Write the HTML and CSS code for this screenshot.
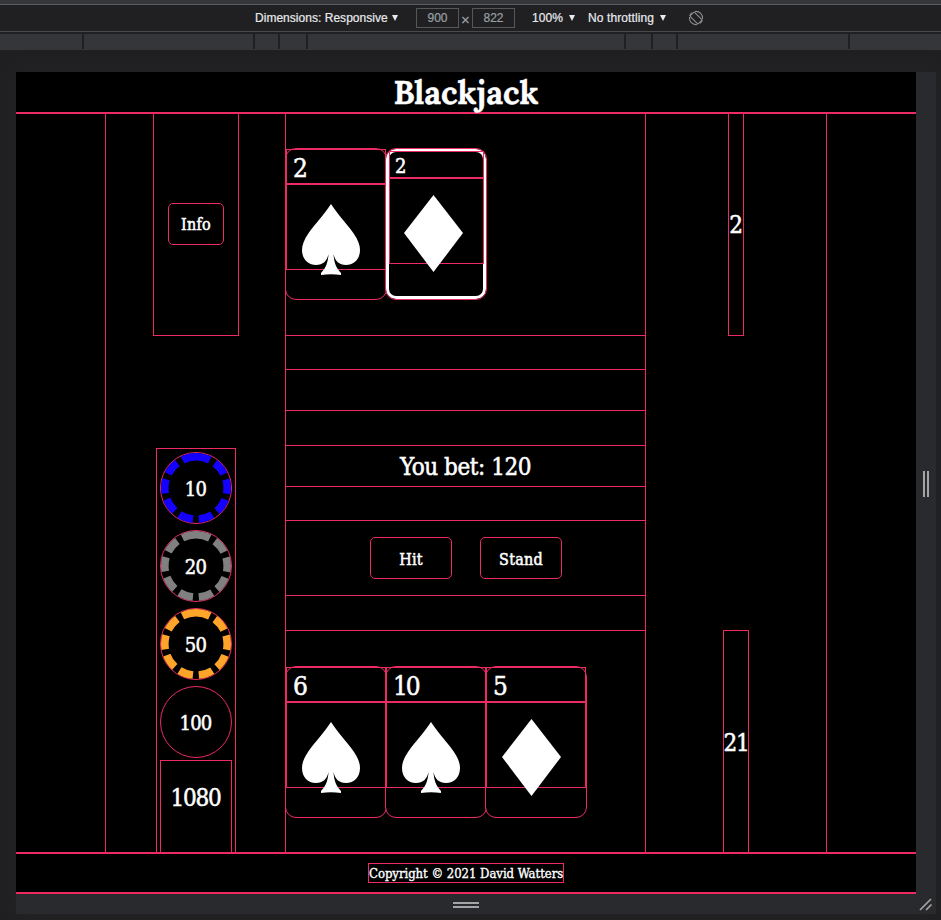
FILE: index.html
```html
<!DOCTYPE html>
<html lang="en">
<head>
<meta charset="utf-8">
<title>Blackjack</title>
<link rel="stylesheet" href="styles.css">
</head>
<body>
<svg width="0" height="0" class="defs">
  <symbol id="spade" viewBox="0 0 58 71"><path d="M29 0C36 11 46 21 52 30C56 36 58 41 58 46C58 55 52 61 44 61C37 61 33 57 31.500 50C32 58 34 64 39 69V71Q29 69.500 19 71V69C24 64 26 58 26.500 50C25 57 21 61 14 61C6 61 0 55 0 46C0 41 2 36 6 30C12 21 22 11 29 0Z" fill="#fff"/></symbol>
  <symbol id="diamond" viewBox="0 0 59 77"><path d="M29.500 0L59 38L29.500 77L0 38Z" fill="#fff"/></symbol>
  <symbol id="ring" viewBox="0 0 70 70"><circle cx="35" cy="35" r="31.200" fill="none" stroke="currentColor" stroke-width="7.600" stroke-dasharray="14.300 5.890" transform="rotate(-90 35 35)"/></symbol>
</svg>
<div class="strip"></div>
<div class="toolbar">
  <span class="dims">Dimensions: Responsive</span><i class="caret"></i>
  <span class="field first">900</span><span class="times">×</span><span class="field">822</span>
  <span class="zoom">100%</span><i class="caret"></i>
  <span class="throttle">No throttling</span><i class="caret"></i>
  <svg class="rotate" width="16" height="16" viewBox="0 0 16 16" fill="none" stroke="#8b8d90" stroke-width="1.100"><rect x="5" y="2.300" width="6" height="11.400" rx="1" transform="rotate(-45 8 8)"/><path d="M7 1.500A6.500 6.500 0 0 1 14.500 9M9 14.500A6.500 6.500 0 0 1 1.500 7M4 2.700A6.500 6.500 0 0 0 1.700 6M12 13.300A6.500 6.500 0 0 0 14.300 10"/></svg>
</div>
<div class="ruler"><i></i><i></i><i></i><i></i><i></i><i></i><i></i><i></i><i></i></div>
<div class="device">
  <div class="page">
    <header><h1>Blackjack</h1></header>
    <main>
      <section class="left">
        <div class="info"><button>Info</button></div>
        <div class="chips">
          <div class="chip"><svg class="ring blue"><use href="#ring"/></svg><span>10</span></div>
          <div class="chip"><svg class="ring gray"><use href="#ring"/></svg><span>20</span></div>
          <div class="chip"><svg class="ring orange"><use href="#ring"/></svg><span>50</span></div>
          <div class="chip"><span>100</span></div>
          <div class="total"><span>1080</span></div>
        </div>
      </section>
      <section class="table">
        <div class="hand">
          <div class="card"><div class="rank">2</div><div class="suit"><svg class="spade"><use href="#spade"/></svg></div></div>
          <div class="card active"><div class="rank">2</div><div class="suit"><svg class="diamond"><use href="#diamond"/></svg></div></div>
        </div>
        <div class="r1"></div><div class="r2"></div><div class="r3"></div>
        <div class="bet"><span>You bet: 120</span></div>
        <div class="r4"></div>
        <div class="actions"><button>Hit</button><button>Stand</button></div>
        <div class="r5"></div>
        <div class="hand player">
          <div class="card"><div class="rank">6</div><div class="suit"><svg class="spade"><use href="#spade"/></svg></div></div>
          <div class="card"><div class="rank">10</div><div class="suit"><svg class="spade"><use href="#spade"/></svg></div></div>
          <div class="card"><div class="rank">5</div><div class="suit"><svg class="diamond"><use href="#diamond"/></svg></div></div>
        </div>
      </section>
      <section class="right">
        <div class="score dealer"><span>2</span></div>
        <div class="score mine"><span>21</span></div>
      </section>
    </main>
    <footer><p><span>Copyright © 2021 David Watters</span></p></footer>
  </div>
  <div class="resize-x"><i></i></div>
  <div class="resize-y"><i></i></div>
  <div class="corner"><svg width="14" height="14" viewBox="0 0 14 14" stroke="#a4a4a5" stroke-width="1.700"><path d="M1 12L12 1M7 12L12.500 6.500"/></svg></div>
</div>
</body>
</html>
```
FILE: styles.css
```css
* { box-sizing: border-box; }
:root { --line: #ec2a63; }
body {
  margin: 0; width: 941px; height: 920px; overflow: hidden;
  background: #202022; color: #fff;
  font-family: "Roboto Slab", "DejaVu Serif Condensed", "DejaVu Serif", serif;
  font-stretch: condensed;
}
.defs { display: block; }
.strip { height: 5px; background: #35363a; border-bottom: 1px solid #5c5d60; }
.toolbar {
  height: 27px; display: flex; align-items: center; padding-left: 255px;
  border-bottom: 1px solid #4a4b4d; color: #e8eaed;
  font: 12px "Liberation Sans", Arial, sans-serif; white-space: nowrap;
  -webkit-text-stroke: .2px;
}
.dims { width: 133px; letter-spacing: .03px; }
.caret { width: 0; height: 0; margin-left: 4px; border: 3.500px solid transparent; border-top: 6.500px solid #e8eaed; border-bottom: 0; }
.field { width: 43px; height: 20px; border: 1px solid #55575a; color: #9aa0a6; text-align: center; line-height: 18px; }
.first { margin-left: 18px; }
.times { width: 13px; text-align: center; color: #9aa0a6; font-size: 15px; padding-top: 2px; }
.zoom { margin-left: 17px; width: 33px; letter-spacing: .1px; }
.throttle { margin-left: 13px; width: 68px; letter-spacing: .1px; }
.rotate { margin-left: 22px; }
.ruler { height: 18px; border-top: 2px solid #202022; background: #35363a; display: grid; grid-template-columns: 84px 171px 25px 28px 318px 27px 25px 172px 1fr; }
.ruler i { border-right: 2px solid #202022; height: 15px; }
.ruler i:last-child { border: 0; }
.device { margin: 22px 0 0 16px; width: 920px; display: grid; grid-template: 822px 20px / 900px 20px; background: #292a2d; box-shadow: 0 0 20px #2a2a2c66; }
.page { background: #000; display: flex; flex-direction: column; }
header { height: 42px; border-bottom: 2px solid var(--line); text-align: center; }
h1 { margin: 0; font: bold 32px/41px Lora, "Liberation Serif", serif; -webkit-text-stroke: .3px #fff; }
main { height: 738px; display: grid; grid-template-columns: 180px 361px 181px; padding-left: 89px; -webkit-text-stroke: .5px #fff; }
.left { border-left: 1px solid var(--line); display: flex; flex-direction: column; align-items: center; }
.info { width: 86px; height: 222px; margin-left: 1px; border: 1px solid var(--line); border-top: 0; display: flex; align-items: center; justify-content: center; }
button { width: 56px; height: 42px; padding: 2px 0 0; background: none; color: #fff; border: 1px solid var(--line); border-radius: 5px; font: inherit; font-stretch: condensed; font-size: 16px; letter-spacing: .25px; }
.info button { margin: -2px 0 0 0; }
.chips { margin-top: 112px; width: 80px; flex: 1; border: 1px solid var(--line); border-bottom: 0; padding: 4px 0 0 4px; }
.chip { position: relative; width: 70px; height: 70px; padding-top: 2px; margin-bottom: 8px; outline: 1px solid var(--line); border-radius: 50%; display: flex; align-items: center; justify-content: center; font-size: 20px; letter-spacing: -.8px; }
.ring { position: absolute; inset: 0; width: 70px; height: 70px; }
.blue { color: #1400ff; }
.gray { color: #808080; }
.orange { color: #ffa52a; }
.total { width: 72px; height: 92px; margin: -5px 0 0 -1px; border: 1px solid var(--line); border-bottom: 0; text-align: center; font-size: 24px; line-height: 74px; letter-spacing: -1.200px; }
.table { border: solid var(--line); border-width: 0 1px; }
.hand { height: 222px; padding-top: 35px; display: flex; border-bottom: 1px solid var(--line); }
.player { padding-top: 36px; border: 0; height: 221px; }
.card { width: 100px; height: 150px; border: 1px solid #000; border-radius: 10px; outline: 1px solid var(--line); }
.rank { height: 34px; padding-left: 6px; line-height: 37px; font-size: 26px; letter-spacing: -2.200px; outline: 1px solid var(--line); }
.suit { height: 85px; outline: 1px solid var(--line); position: relative; }
.suit svg { position: absolute; }
.spade { width: 58px; height: 71px; left: 15px; top: 20px; }
.diamond { width: 59px; height: 77px; left: 15px; top: 17px; }
.active { border: 3px solid #fff; }
.active .rank, .active .suit { margin-left: 1px; }
.active .diamond { left: 14px; }
.active .rank { height: 26px; padding-left: 5px; font-size: 20px; line-height: 29px; }
.r1, .r2, .r3, .r4, .r5, .bet, .actions { border-bottom: 1px solid var(--line); }
.r1, .r4 { height: 34px; }
.r2, .bet { height: 41px; }
.r3, .r5 { height: 35px; }
.bet { text-align: center; font-size: 24px; line-height: 42px; letter-spacing: -.45px; }
.actions { height: 75px; display: flex; gap: 28px; justify-content: center; padding: 16px 0 0 1px; }
.actions button { width: 82px; }
.right { border-right: 1px solid var(--line); display: flex; flex-direction: column; justify-content: space-between; align-items: center; }
.score { border: 1px solid var(--line); display: flex; align-items: center; justify-content: center; font-size: 24px; height: 222px; }
.dealer { width: 16px; border-top: 0; }
.mine { width: 26px; border-bottom: 0; letter-spacing: -1.200px; padding: 2px 0 0; }
footer { height: 42px; border: solid var(--line); border-width: 2px 0; text-align: center; }
footer p { width: 196px; height: 20px; margin: 9px auto 0; border: 1px solid var(--line); font-size: 13px; line-height: 19px; white-space: nowrap; letter-spacing: -.040px; -webkit-text-stroke: .35px #fff; }
.resize-x, .resize-y, .corner { display: flex; align-items: center; justify-content: center; padding-top: 2px; }
.resize-x i { width: 6px; height: 26px; border: solid #a4a4a5; border-width: 0 2px; }
.resize-y i { width: 26px; height: 6px; border: solid #a4a4a5; border-width: 2px 0; }
```
